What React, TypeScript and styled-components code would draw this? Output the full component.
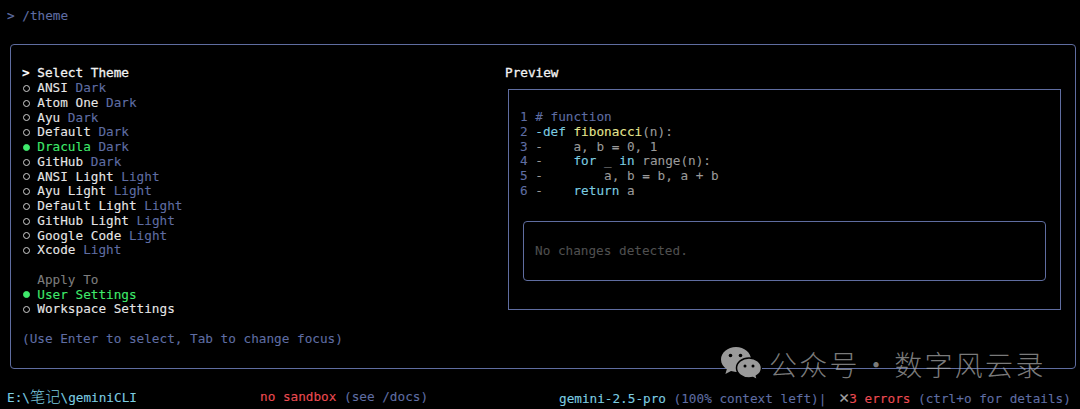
import React, { FC } from 'react';
import styled, { createGlobalStyle } from 'styled-components';

const colors = {
  bg: '#000000',
  text: '#e6e6e6',
  muted: '#5f6da3',
  border: '#5f6da0',
  green: '#3fe96b',
  cyan: '#7ccde0',
  yellow: '#e3e48f',
  red: '#ec4b52',
  gray: '#8c8c8c',
};

const themes = [
  { name: 'ANSI', kind: 'Dark' },
  { name: 'Atom One', kind: 'Dark' },
  { name: 'Ayu', kind: 'Dark' },
  { name: 'Default', kind: 'Dark' },
  { name: 'Dracula', kind: 'Dark', active: true },
  { name: 'GitHub', kind: 'Dark' },
  { name: 'ANSI Light', kind: 'Light' },
  { name: 'Ayu Light', kind: 'Light' },
  { name: 'Default Light', kind: 'Light' },
  { name: 'GitHub Light', kind: 'Light' },
  { name: 'Google Code', kind: 'Light' },
  { name: 'Xcode', kind: 'Light' },
];

const GlobalStyle = createGlobalStyle`
  html, body {
    margin: 0;
    background: ${colors.bg};
  }
  body {
    font-family: "DejaVu Sans Mono", "Noto Sans CJK SC", monospace;
    font-size: 12.7px;
    line-height: 14.75px;
    color: ${colors.text};
    -webkit-text-stroke: 0.1px;
  }
`;

const Screen = styled.div`
  position: relative;
  width: 1080px;
  height: 409px;
  overflow: hidden;
  padding: 9px 4px 0 7px;
  box-sizing: border-box;
`;

const Prompt = styled.div`
  height: 14.75px;
  color: ${colors.muted};
`;

const Panel = styled.div`
  margin: 20px 0 0 3px;
  height: 325px;
  box-sizing: border-box;
  border: 1px solid ${colors.border};
  border-radius: 4px;
  padding: 21.6px 0 0 11px;
  display: grid;
  grid-template-columns: 483px 1fr;
`;

const Row = styled.div<{ $accent?: boolean }>`
  display: flex;
  height: 14.75px;
  white-space: pre;
  color: ${(p) => (p.$accent ? colors.green : colors.text)};
`;

const Marker = styled.span`
  width: 15.3px;
  flex: none;
  display: flex;
  align-items: center;
`;

const Caret = styled(Marker)`
  font-weight: 700;
  color: #fff;
`;

const Dot = styled.i<{ $on?: boolean }>`
  width: 7px;
  height: 7px;
  margin-left: 1px;
  box-sizing: border-box;
  border-radius: 50%;
  border: 1.5px solid ${(p) => (p.$on ? colors.green : '#cfcfcf')};
  background: ${(p) => (p.$on ? colors.green : 'transparent')};
`;

const Title = styled.span`
  color: #f2f2f2;
  -webkit-text-stroke: 0.3px;
`;

const Kind = styled.span`
  color: ${colors.muted};
`;

const Spacer = styled.div`
  height: 14.75px;
`;

const Hint = styled.div`
  color: ${colors.muted};
`;

const ApplyLabel = styled.div`
  padding-left: 15.3px;
  color: #7d7d7d;
`;

const PreviewColumn = styled.div`
  display: flex;
  flex-direction: column;
`;

const PreviewBox = styled.div`
  margin: 8px 0 0 3px;
  width: 553px;
  height: 221px;
  box-sizing: border-box;
  border: 1px solid ${colors.border};
  padding: 20px 14px 0 11px;
`;

const Code = styled.div`
  height: 111px;
`;

const CodeLine = styled.div`
  white-space: pre;
  height: 14.75px;
  color: #9a9a9a;
`;

const LineNo = styled.span`
  color: ${colors.muted};
`;

const Comment = styled.span`
  color: ${colors.muted};
`;

const Keyword = styled.span`
  color: ${colors.cyan};
`;

const FuncName = styled.span`
  color: ${colors.yellow};
`;

const DiffBox = styled.div`
  margin-left: 3px;
  width: 523px;
  height: 60px;
  box-sizing: border-box;
  border: 1px solid ${colors.border};
  border-radius: 4px;
  padding: 0 11px;
  display: flex;
  align-items: center;
  color: #4f4f4f;
`;

const Footer = styled.div`
  margin-top: 21.5px;
  display: grid;
  grid-template-columns: 253px 299px 1fr;
  white-space: pre;
  color: ${colors.muted};
`;

const FooterPath = styled.span`
  color: ${colors.cyan};
`;

const Cjk = styled.span`
  font-size: 15.3px;
  font-weight: 300;
  -webkit-text-stroke: 0;
`;

const Red = styled.span`
  color: ${colors.red};
`;

const Cross = styled.span`
  display: inline-block;
  width: 15.3px;
  text-align: right;
  font-size: 17px;
  color: #a0a0a0;
`;

const Watermark = styled.div`
  position: absolute;
  left: 720px;
  top: 344px;
  display: flex;
  align-items: center;
  gap: 7px;
  font-family: "Noto Sans CJK SC", sans-serif;
  font-size: 28px;
  line-height: 40px;
  letter-spacing: 2.3px;
  font-weight: 300;
  white-space: pre;
  color: rgba(170, 170, 170, 0.72);
  -webkit-text-stroke: 0;
`;

const Separator = styled.span`
  margin: 0 2px;
`;

const WeChatIcon: FC = () => (
  <svg width="42" height="36" viewBox="0 0 42 36">
    <path d="M16 1C7.7 1 1 6.6 1 13.5c0 4 2.3 7.5 5.8 9.8L5.4 28l5.6-2.9c1.6.5 3.3.8 5 .8C24.3 25.900 31 20.300 31 13.500S24.300 1 16 1z" fill="#9a9a9a" />
    <path d="M29 12c-6.900 0-12.500 4.500-12.500 10S22.100 32 29 32c1.400 0 2.700-.2 3.900-.5l4.600 2.500-1.100-4C39.500 28.200 41.500 25.300 41.500 22 41.500 16.500 35.900 12 29 12z" fill="#9a9a9a" stroke="#000" strokeWidth="1.500" />
    <circle cx="10.500" cy="9.500" r="1.800" fill="#000" />
    <circle cx="20.500" cy="9.500" r="1.800" fill="#000" />
    <circle cx="25" cy="20" r="1.500" fill="#000" />
    <circle cx="33" cy="20" r="1.500" fill="#000" />
  </svg>
);

export default function App() {
  return (
    <Screen>
      <GlobalStyle />
      <Prompt>{'> /theme'}</Prompt>
      <Panel>
        <div>
          <Row>
            <Caret>&gt;</Caret>
            <Title>Select Theme</Title>
          </Row>
          {themes.map((item) => (
            <Row key={item.name} $accent={item.active}>
              <Marker>
                <Dot $on={item.active} />
              </Marker>
              <span>{item.name} </span>
              <Kind>{item.kind}</Kind>
            </Row>
          ))}
          <Spacer />
          <ApplyLabel>Apply To</ApplyLabel>
          <Row $accent>
            <Marker>
              <Dot $on />
            </Marker>
            <span>User Settings</span>
          </Row>
          <Row>
            <Marker>
              <Dot />
            </Marker>
            <span>Workspace Settings</span>
          </Row>
          <Spacer />
          <Hint>(Use Enter to select, Tab to change focus)</Hint>
        </div>
        <PreviewColumn>
          <Title>Preview</Title>
          <PreviewBox>
            <Code>
              <CodeLine>
                <LineNo>1 </LineNo>
                <Comment># function</Comment>
              </CodeLine>
              <CodeLine>
                <LineNo>2 </LineNo>
                <Keyword>-def </Keyword>
                <FuncName>fibonacci</FuncName>(n):
              </CodeLine>
              <CodeLine>
                <LineNo>3 </LineNo>-    a, b = 0, 1
              </CodeLine>
              <CodeLine>
                <LineNo>4 </LineNo>-    <Keyword>for</Keyword> _ <Keyword>in</Keyword> range(n):
              </CodeLine>
              <CodeLine>
                <LineNo>5 </LineNo>-        a, b = b, a + b
              </CodeLine>
              <CodeLine>
                <LineNo>6 </LineNo>-    <Keyword>return</Keyword> a
              </CodeLine>
            </Code>
            <DiffBox>No changes detected.</DiffBox>
          </PreviewBox>
        </PreviewColumn>
      </Panel>
      <Footer>
        <FooterPath>
          E:\<Cjk>笔记</Cjk>\geminiCLI
        </FooterPath>
        <span>
          <Red>no sandbox</Red> (see /docs)
        </span>
        <span>
          <FooterPath>gemini-2.5-pro</FooterPath> (100% context left)| <Cross>✕</Cross>
          <Red>3 errors</Red> (ctrl+o for details)
        </span>
      </Footer>
      <Watermark>
        <WeChatIcon />
        <span>
          公众号<Separator>·</Separator>数字风云录
        </span>
      </Watermark>
    </Screen>
  );
}
